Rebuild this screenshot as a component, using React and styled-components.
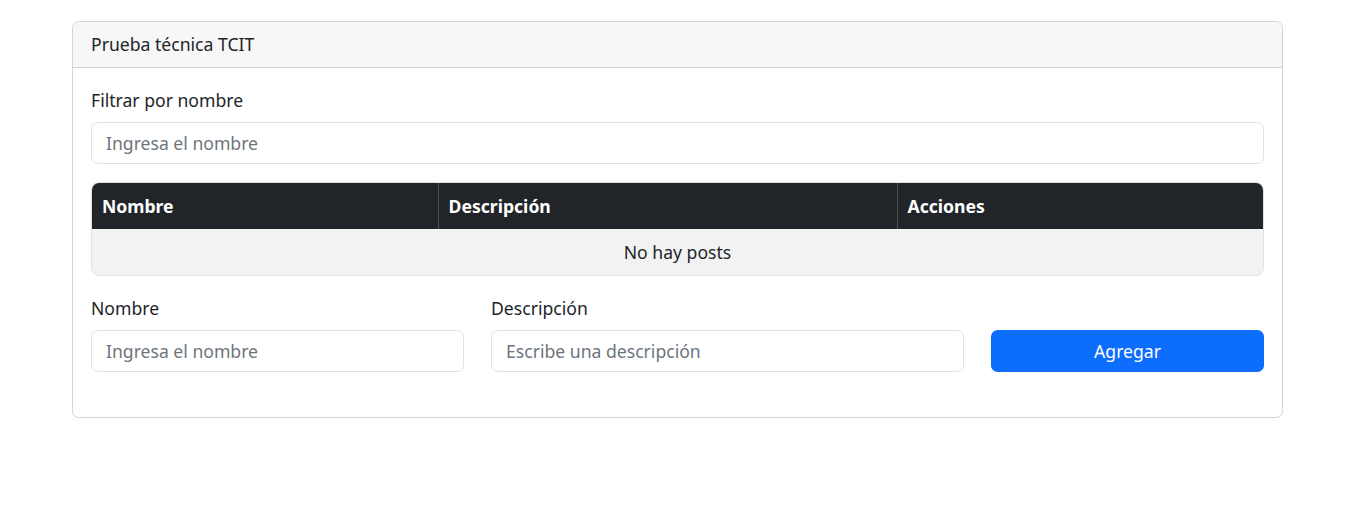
import styled, { createGlobalStyle } from "styled-components";

const GlobalStyle = createGlobalStyle`
  body {
    margin: 0;
    background: #fff;
    font-family: "Noto Sans", "Open Sans", sans-serif;
    font-size: 17.6px;
    line-height: 1.5;
    color: #212529;
  }
  * { box-sizing: border-box; }
`;

const Page = styled.div`
  padding: 21px 0 0 72px;
`;

const Card = styled.div`
  width: 1211px;
  border: 1px solid #d3d3d4;
  border-radius: 6.6px;
  overflow: hidden;
`;

const CardHeader = styled.div`
  background: #f7f7f7;
  border-bottom: 1px solid #d3d3d4;
  padding: 9px 18px;
  line-height: 27px;
`;

const CardBody = styled.div`
  padding: 19px 18px 45px 18px;
`;

const Label = styled.label`
  display: block;
  line-height: 26px;
  margin-bottom: 9px;
`;

const Input = styled.input`
  display: block;
  width: 100%;
  height: 42px;
  padding: 0 14px;
  font: inherit;
  color: #212529;
  border: 1px solid #dee2e6;
  border-radius: 6.6px;
  background: #fff;
  outline: none;
  &::placeholder {
    color: #6c757d;
  }
`;

const TableWrap = styled.div`
  margin-top: 18px;
  border: 1px solid #dee2e6;
  border-radius: 8px;
  overflow: hidden;
`;

const Table = styled.table`
  width: 100%;
  border-collapse: collapse;
  table-layout: fixed;
`;

const Th = styled.th`
  background: #212529;
  color: #fff;
  text-align: left;
  font-weight: 700;
  padding: 9px 10px;
  line-height: 28px;
  width: ${(p) => p.$w}px;
  & + & {
    border-left: 1px solid #4d5154;
  }
`;

const Td = styled.td`
  background: #f2f2f2;
  text-align: center;
  padding: 9px 10px;
  line-height: 28px;
`;

const FormRow = styled.div`
  display: grid;
  grid-template-columns: 373px 473px 273px;
  column-gap: 27px;
  align-items: end;
  margin-top: 19px;
`;

const Field = styled.div``;

const Button = styled.button`
  height: 42px;
  width: 100%;
  border: none;
  border-radius: 6.6px;
  background: #0d6efd;
  color: #fff;
  font: inherit;
  cursor: pointer;
`;

export default function App() {
  return (
    <>
      <GlobalStyle />
      <Page>
        <Card>
          <CardHeader>Prueba técnica TCIT</CardHeader>
          <CardBody>
            <Label>Filtrar por nombre</Label>
            <Input placeholder="Ingresa el nombre" />
            <TableWrap>
              <Table>
                <thead>
                  <tr>
                    <Th $w={346}>Nombre</Th>
                    <Th $w={459}>Descripción</Th>
                    <Th>Acciones</Th>
                  </tr>
                </thead>
                <tbody>
                  <tr>
                    <Td colSpan={3}>No hay posts</Td>
                  </tr>
                </tbody>
              </Table>
            </TableWrap>
            <FormRow>
              <Field>
                <Label>Nombre</Label>
                <Input placeholder="Ingresa el nombre" />
              </Field>
              <Field>
                <Label>Descripción</Label>
                <Input placeholder="Escribe una descripción" />
              </Field>
              <Button>Agregar</Button>
            </FormRow>
          </CardBody>
        </Card>
      </Page>
    </>
  );
}
